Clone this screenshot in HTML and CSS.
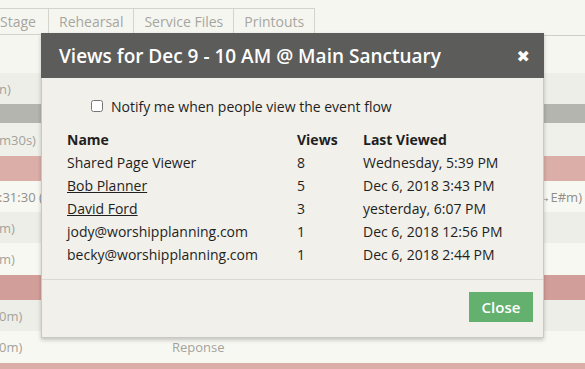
FILE: index.html
```
<!DOCTYPE html>
<html>
<head>
<meta charset="utf-8">
<link rel="stylesheet" href="styles.css">
</head>
<body>
<div class="page">
  <div class="tabs">
    <div class="tab tab-first">Stage</div>
    <div class="tab">Rehearsal</div>
    <div class="tab">Service Files</div>
    <div class="tab">Printouts</div>
    <div class="tab-fill"></div>
  </div>
  <div class="rows">
    <div class="row r-a"></div>
    <div class="row r-b"><span class="lt">n)</span></div>
    <div class="row r-gray"></div>
    <div class="row r-c"><span class="lt">m30s)</span></div>
    <div class="row r-pink"></div>
    <div class="row r-d"><span class="lt">:31:30 (</span><span class="rt">→E#m)</span></div>
    <div class="row r-e"><span class="lt">m)</span></div>
    <div class="row r-f"><span class="lt">m)</span></div>
    <div class="row r-pink2"></div>
    <div class="row r-g"><span class="lt">0m)</span></div>
    <div class="row r-h"><span class="lt">0m)</span><span class="mid">Reponse</span></div>
    <div class="row r-pink3"></div>
  </div>

  <div class="modal">
    <div class="modal-head">
      <h3 class="modal-title">Views for Dec 9 - 10 AM @ Main Sanctuary</h3>
      <span class="modal-x">&#x2716;</span>
    </div>
    <div class="modal-body">
      <label class="notify"><input type="checkbox" class="cb"> Notify me when people view the event flow</label>
      <table class="views">
        <thead>
          <tr><th class="c-name">Name</th><th class="c-views">Views</th><th>Last Viewed</th></tr>
        </thead>
        <tbody>
          <tr><td>Shared Page Viewer</td><td>8</td><td>Wednesday, 5:39 PM</td></tr>
          <tr><td><a href="#" class="lnk">Bob Planner</a></td><td>5</td><td>Dec 6, 2018 3:43 PM</td></tr>
          <tr><td><a href="#" class="lnk">David Ford</a></td><td>3</td><td>yesterday, 6:07 PM</td></tr>
          <tr><td>jody@worshipplanning.com</td><td>1</td><td>Dec 6, 2018 12:56 PM</td></tr>
          <tr><td>becky@worshipplanning.com</td><td>1</td><td>Dec 6, 2018 2:44 PM</td></tr>
        </tbody>
      </table>
    </div>
    <div class="modal-foot">
      <button class="btn-close">Close</button>
    </div>
  </div>
</div>
</body>
</html>
```
FILE: styles.css
```
* { box-sizing: border-box; }
html, body { margin: 0; padding: 0; }
body {
  width: 585px;
  height: 369px;
  overflow: hidden;
  background: #f6f6f1;
  font-family: "Open Sans", "Liberation Sans", sans-serif;
}
.page { position: relative; width: 585px; height: 369px; overflow: hidden; }

.tabs {
  display: flex;
  padding-top: 8px;
  height: 36px;
}
.tab {
  height: 27px;
  border: 1px solid #d4d4cc;
  border-left: none;
  color: #a6a69f;
  font-size: 14px;
  line-height: 26px;
  padding: 0 10px;
  white-space: nowrap;
}
.tab-first { margin-left: -8px; width: 57px; padding-left: 8px; }
.tab-fill { flex: 1; border-bottom: 1px solid #cfcfc7; height: 28px; }

.rows { display: flex; flex-direction: column; }
.row {
  position: relative;
  display: flex;
  align-items: center;
  color: #a3a39c;
  font-size: 13px;
  white-space: nowrap;
}
.lt { margin-left: -1px; }
.rt { margin-left: auto; padding-right: 3px; }
.mid { position: absolute; left: 172px; }
.r-a { height: 37px; background: #f6f6f1; }
.r-b { height: 31px; background: #eeeee8; }
.r-gray { height: 19px; background: #b5b5af; }
.r-c { height: 33px; background: #f0f0ea; }
.r-pink { height: 25px; background: #dbaea8; }
.r-d { height: 31px; background: #f8f8f3; color: #8f8f88; }
.r-e { height: 31px; background: #eeeee8; }
.r-f { height: 32px; background: #f8f8f3; }
.r-pink2 { height: 25px; background: #d29e99; }
.r-g { height: 31px; background: #eeeee8; }
.r-h { height: 32px; background: #f8f8f3; }
.r-pink3 { height: 10px; background: #dbaea8; }

.modal {
  position: absolute;
  left: 41px;
  top: 33px;
  width: 503px;
  height: 305px;
  background: #f1f0ea;
  border: 1px solid #c9c9c2;
  box-shadow: 0 2px 4px rgba(0,0,0,0.22);
  display: flex;
  flex-direction: column;
}
.modal-head {
  height: 45px;
  background: #5c5c5a;
  display: flex;
  align-items: center;
  padding: 0 14px 0 18px;
  margin: -1px -1px 0 -1px;
}
.modal-title {
  margin: 0;
  flex: 1;
  color: #ffffff;
  font-size: 19px;
  font-weight: 600;
  padding-top: 1px;
}
.modal-x {
  color: #ffffff;
  font-size: 16px;
  font-family: "DejaVu Sans", sans-serif;
  padding-top: 1px;
}
.modal-body {
  flex: 1;
  padding: 17px 0 0 25px;
  border-bottom: 1px solid #d9d8d1;
}
.notify {
  display: flex;
  align-items: center;
  margin-left: 24px;
  font-size: 14px;
  color: #1f1f1f;
  height: 22px;
}
.cb {
  width: 12px;
  height: 12px;
  margin: 0 8px 0 0;
}
.views {
  border-collapse: collapse;
  margin-top: 11px;
  font-size: 14px;
  color: #1f1f1f;
}
.views th, .views td {
  padding: 0;
  height: 23px;
  text-align: left;
  white-space: nowrap;
}
.views th { font-weight: 700; }
.c-name { width: 230px; }
.c-views { width: 66px; }
.lnk { color: #1f1f1f; text-decoration: underline; }
.modal-foot {
  height: 57px;
  display: flex;
  justify-content: flex-end;
  align-items: flex-start;
  padding: 12px 10px 0 0;
}
.btn-close {
  width: 64px;
  height: 30px;
  background: #64b06e;
  border: none;
  color: #ffffff;
  font-family: "Open Sans", "Liberation Sans", sans-serif;
  font-size: 15px;
  font-weight: 600;
  padding: 0;
}
```
